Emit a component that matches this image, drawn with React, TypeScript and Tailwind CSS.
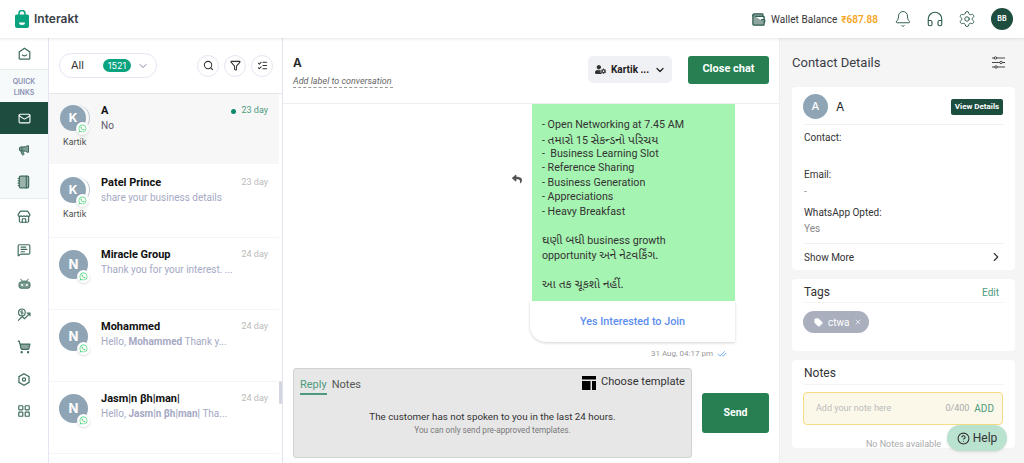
import React from "react";
import { Mail, Megaphone, Notebook, Store, MessageSquareText, ShoppingCart, LayoutGrid, Wallet, Bell, Headphones, Settings, Search, Funnel, ListChecks, ChevronDown, ChevronRight, CheckCheck, Tag, X, CircleHelp } from "lucide-react";
import { FaWhatsapp, FaReply, FaUserCog } from "react-icons/fa";

const Logo = () => (
  <svg width="14" height="18" viewBox="0 0 14 18" className="shrink-0">
    <path d="M4 5V3.5a3 3 0 0 1 6 0V5" fill="none" stroke="#0aa37f" strokeWidth="1.6" />
    <path d="M1.5 4.5h11A1.5 1.5 0 0 1 14 6v10a2 2 0 0 1-2 2H2a2 2 0 0 1-2-2V6a1.5 1.5 0 0 1 1.5-1.5z" fill="#0aa37f" />
    <path d="M4 12.5h6a3 2.5 0 0 1-6 0z" fill="#fff" />
  </svg>
);

const Home = () => (
  <svg width="13" height="13" viewBox="0 0 16 16" fill="none" stroke="#3f6b5e" strokeWidth="1.500">
    <path d="M8 1.500 14.500 6v8a1 1 0 0 1-1 1h-11a1 1 0 0 1-1-1V6z" />
    <path d="M5 9.500c1.500 2 4.500 2 6 0" />
  </svg>
);

const Bot = () => (
  <svg width="13" height="11" viewBox="0 0 16 14" fill="#7f9e94" stroke="#3f6b5e" strokeWidth="1.200">
    <path d="M3 1 5 4h6l2-3" fill="none" />
    <rect x="1" y="5" width="14" height="8" rx="2.500" />
    <circle cx="5" cy="9" r="1.300" fill="#fff" stroke="none" />
    <circle cx="11" cy="9" r="1.300" fill="#fff" stroke="none" />
  </svg>
);

const Growth = () => (
  <svg width="15" height="14" viewBox="0 0 20 18" fill="none" stroke="#3f6b5e" strokeWidth="1.500">
    <circle cx="6.500" cy="5.500" r="4.500" />
    <path d="M8 3.800H5.500a.9.900 0 0 0 0 1.800h2a.9.900 0 0 1 0 1.800H5M6.500 2.500v6" strokeWidth="1" />
    <path d="M1.500 16.500 7 11l3 3 7-7M13 6.500h4.300v4" />
  </svg>
);

const HexIcon = () => (
  <svg width="12" height="13" viewBox="0 0 16 18" fill="none" stroke="#3f6b5e" strokeWidth="1.700">
    <path d="M8 1 15 5v8l-7 4-7-4V5z" />
    <circle cx="8" cy="9" r="2.200" />
  </svg>
);

const TemplateIcon = () => (
  <svg width="14" height="14" viewBox="0 0 14 14" fill="#000" className="shrink-0">
    <rect x="0" y="0" width="14" height="3.500" />
    <rect x="0" y="5" width="8.500" height="9" />
    <rect x="10" y="5" width="4" height="9" />
  </svg>
);

const Sliders = () => (
  <svg width="13" height="13" viewBox="0 0 13 13" fill="#fff" stroke="#333" strokeWidth="0.900">
    <path d="M0 2h13M0 6.500h13M0 11h13" />
    <circle cx="3.500" cy="2" r="1.200" />
    <circle cx="9" cy="6.500" r="1.200" />
    <circle cx="4" cy="11" r="1.200" />
  </svg>
);

function Avatar({ letter, name }: { letter: string; name?: string }) {
  if (name) {
    return (
      <div className="relative w-[30px] shrink-0 mt-[2px] h-[26px]">
        <div className="absolute left-[5px] top-0 w-[26px] h-[26px] rounded-full border-r border-[#b9c5cf]" />
        <div className="relative ml-[1px] w-[26px] h-[26px] rounded-full bg-[#8fa5b5] text-white text-[12px] font-bold flex items-center justify-center font-['Inter']">{letter}</div>
        <div className="absolute left-[17px] top-[17px] w-[13px] h-[13px] rounded-full bg-white shadow-sm flex items-center justify-center">
          <FaWhatsapp className="text-[#41d070] text-[9px]" />
        </div>
        <div className="absolute top-[31px] left-[4px] text-[8.500px] leading-[12px] text-[#4b4b4b] font-['Inter']">{name}</div>
      </div>
    );
  }
  return (
    <div className="relative w-[30px] h-[30px] shrink-0 mt-[3px]">
      <div className="w-[29px] h-[29px] rounded-full bg-[#8fa5b5] text-white text-[13px] font-bold flex items-center justify-center font-['Inter']">{letter}</div>
      <div className="absolute left-[18px] top-[20px] w-[13px] h-[13px] rounded-full bg-white shadow-sm flex items-center justify-center">
        <FaWhatsapp className="text-[#41d070] text-[9px]" />
      </div>
    </div>
  );
}

function Row({ title, preview, date, letter, name, active }: { title: string; preview: React.ReactNode; date: string; letter: string; name?: string; active?: boolean }) {
  return (
    <div className={active ? "h-[70px] mb-[2px] flex pl-[10px] pr-[11px] pt-[9px] bg-[#f7f7f7]" : "h-[72px] flex pl-[10px] pr-[11px] pt-[9px] border-b border-[#f5f5f7]"}>
      <Avatar letter={letter} name={name} />
      <div className="ml-[12px] flex-1 min-w-0">
        <div className="flex justify-between items-center h-[16px]">
          <span className="text-[11px] font-bold text-[#111] whitespace-nowrap">{title}</span>
          <span className="flex items-center gap-[5px] text-[9px]">
            {active && <span className="w-[5px] h-[5px] rounded-full bg-[#0a8a6a]" />}
            <span className={active ? "text-[#4f9a7d]" : "text-[#bbb]"}>{date}</span>
          </span>
        </div>
        <div className={`text-[10px] leading-[14px] whitespace-nowrap ${active ? "text-[#5a5a6a]" : "text-[#a5a9c4]"}`}>{preview}</div>
      </div>
    </div>
  );
}

const nav = "h-[32px] flex items-center justify-center text-[#3f6b5e]";
const G = ({ children }: { children: React.ReactNode }) => <span className="inline-block text-[12px] leading-[14px]">{children}</span>;

const messageLines: React.ReactNode[] = [
  "- Open Networking at 7.45 AM",
  <>- <G>તમારો</G> 15 <G>સેકન્ડનો પરિચય</G></>,
  "-  Business Learning Slot",
  "- Reference Sharing",
  "- Business Generation",
  "- Appreciations",
  "- Heavy Breakfast",
  "",
  <><G>ઘણી બધી</G> business growth</>,
  <>opportunity <G>અને નેટવર્કિંગ.</G></>,
  "",
  <G>આ તક ચૂકશો નહીં.</G>,
];

export default function App() {
  return (
    <div className="w-[1024px] h-[463px] overflow-hidden bg-white flex flex-col font-['Roboto',sans-serif] relative">
      <header className="h-[38px] shrink-0 flex items-center pl-[15px] pr-[11px] shadow-[0_1px_3px_rgba(0,0,0,0.1)] relative z-10 bg-white">
        <Logo />
        <span className="ml-[5px] text-[12px] font-semibold text-[#3a3f48] font-['Inter']">Interakt</span>
        <div className="ml-auto flex items-center">
          <Wallet size={15} className="text-[#2f5d50]" fill="#8fa5a0" />
          <span className="ml-[5px] text-[10px] tracking-[0.05px] text-[#333]">Wallet Balance</span>
          <span className="ml-[4px] text-[10px] font-semibold text-[#f5a623]">₹687.88</span>
          <Bell size={18} strokeWidth={1.300} className="ml-[16px] text-[#2f5d50]" />
          <Headphones size={18} strokeWidth={1.500} className="ml-[14px] text-[#2f5d50]" />
          <Settings size={18} strokeWidth={1.300} className="ml-[14px] text-[#2f5d50]" />
          <div className="ml-[15px] w-[22px] h-[22px] rounded-full bg-[#1d4d3e] text-white text-[7px] font-bold flex items-center justify-center font-['Inter']">BB</div>
        </div>
      </header>

      <div className="flex flex-1 min-h-0">
        <aside className="w-[49px] shrink-0 border-r border-[#e4e6f2] flex flex-col">
          <div className="h-[31px] flex items-center justify-center"><Home /></div>
          <div className="bg-[#f6fafa] border-y border-[#e6eef0]">
            <div className="h-[32px] pt-[7px] text-center text-[7px] font-semibold leading-[10.500px] text-[#8b90b5] font-['Inter']">QUICK<br />LINKS</div>
            <div className={`${nav} !text-white bg-[#1d4d3e]`}><Mail size={13} /></div>
            <div className={nav}><Megaphone size={12} fill="#7f9e94" /></div>
            <div className={nav}><Notebook size={14} fill="#9bb3aa" /></div>
          </div>
          <div>
            <div className={`${nav} mt-[2px]`}><Store size={14} /></div>
            <div className={`${nav} mt-[1px]`}><MessageSquareText size={14} /></div>
            <div className={`${nav} mt-[1px]`}><Bot /></div>
            <div className={nav}><Growth /></div>
            <div className={nav}><ShoppingCart size={14} fill="#8fa5a0" /></div>
            <div className={nav}><HexIcon /></div>
            <div className={nav}><LayoutGrid size={14} /></div>
          </div>
        </aside>

        <section className="w-[234px] shrink-0 border-r border-[#e0e2ec] flex flex-col relative">
          <div className="h-[56px] shrink-0 flex items-center pl-[10px] pr-[9px] border-b border-[#e5e5ea]">
            <div className="w-[98px] h-[25px] rounded-full border border-[#e4e6f2] flex items-center pl-[11px]">
              <span className="text-[11px] text-[#333] font-['Inter']">All</span>
              <span className="ml-[19px] w-[28px] h-[13px] rounded-full bg-[#0aa37f] text-white text-[9px] flex items-center justify-center font-['Inter']">1521</span>
              <ChevronDown size={12} className="ml-[6px] text-[#7f8aa5]" />
            </div>
            <div className="ml-auto flex gap-[5px]">
              {[Search, Funnel, ListChecks].map((I, i) => (
                <div key={i} className="w-[22px] h-[22px] rounded-full border border-[#e4e6f2] flex items-center justify-center">
                  <I size={11} strokeWidth={2.200} className="text-[#333]" />
                </div>
              ))}
            </div>
          </div>
          <div className="flex-1 overflow-hidden pr-[3px]">
            <Row active title="A" preview="No" date="23 day" letter="K" name="Kartik" />
            <Row title="Patel Prince" preview="share your business details" date="23 day" letter="K" name="Kartik" />
            <Row title="Miracle Group" preview="Thank you for your interest. ..." date="24 day" letter="N" />
            <Row title="Mohammed" preview={<>Hello, <b>Mohammed</b> Thank y...</>} date="24 day" letter="N" />
            <Row title="Jasm|n βh|man|" preview={<>Hello, <b>Jasm|n βh|man|</b> Tha...</>} date="24 day" letter="N" />
          </div>
          <div className="absolute right-[0px] top-[343px] w-[3px] h-[23px] bg-[#d3d6df] rounded-sm" />
        </section>

        <main className="w-[497px] shrink-0 flex flex-col border-r border-[#eeeeee]">
          <div className="h-[66px] shrink-0 flex items-center pl-[10px] pr-[10px] border-b border-[#eeeeee]">
            <div className="mt-[2px]">
              <div className="text-[12px] font-semibold text-[#222] leading-[14px] mb-[6px] font-['Inter']">A</div>
              <div className="text-[9px] italic text-[#666] leading-[11px] border-b border-dashed border-[#999] w-[100px] whitespace-nowrap">Add label to conversation</div>
            </div>
            <div className="ml-auto -mt-[2px] w-[84px] h-[27px] rounded-[5px] bg-[#f0f1f5] flex items-center pl-[7px] pr-[6px] text-[10px] font-bold text-[#222]">
              <FaUserCog className="shrink-0 text-[#333] text-[11px]" />
              <span className="ml-[5px] whitespace-nowrap">Kartik ...</span>
              <ChevronDown size={12} strokeWidth={2.500} className="ml-auto" />
            </div>
            <div className="ml-[16px] -mt-[2px] w-[81px] h-[28px] rounded-[3px] bg-[#268052] text-white text-[11px] font-bold flex items-center justify-center">Close chat</div>
          </div>

          <div className="flex-1 min-h-0 overflow-hidden flex flex-col justify-end items-end pr-[44px] relative">
            <div className="flex flex-col items-end shrink-0">
              <div className="relative w-[203px] bg-[#a6f4b1] px-[10px] pt-[15px] pb-[10px] text-[10.700px] leading-[14.400px] text-[#333] font-['Roboto','Noto_Sans_Gujarati','Noto_Sans',sans-serif] whitespace-pre">
                <div className="absolute left-[-20px] top-[71px] text-[#555] text-[10px]"><FaReply /></div>
                {messageLines.map((line, i) => (
                  <div key={i} className="h-[14.400px]">{line}</div>
                ))}
              </div>
              <div className="w-[205px] h-[41px] pt-[2px] bg-white rounded-bl-[16px] shadow-[0_1px_3px_rgba(0,0,0,0.18)] flex items-center justify-center text-[10.800px] font-medium text-[#5b8def]">Yes Interested to Join</div>
            </div>
            <div className="h-[26px] shrink-0 flex items-center pr-[8px] text-[8px] text-[#999] pb-[3px] gap-[4px]">31 Aug, 04:17 pm <CheckCheck size={10} className="text-[#5aa5f0]" /></div>
          </div>

          <div className="h-[95px] shrink-0 flex items-center pl-[10px] pr-[10px] pb-[5px]">
            <div className="w-[399px] h-[90px] rounded-[3px] border border-[#d2d2d2] bg-[#e7e7e7] flex flex-col px-[6px] pt-[6px]">
              <div className="flex items-start justify-between">
                <div className="flex gap-[5px] text-[11px] mt-[3px]">
                  <span className="text-[#4f9a7d] border-b-2 border-[#4f9a7d] pb-[1px] leading-[14px]">Reply</span>
                  <span className="text-[#555] leading-[14px]">Notes</span>
                </div>
                <div className="flex items-center gap-[5px] text-[11.100px] text-[#333] h-[15px]"><TemplateIcon /> Choose template</div>
              </div>
              <div className="text-center text-[9.800px] text-[#333] leading-[12px] mt-[16px]">The customer has not spoken to you in the last 24 hours.</div>
              <div className="text-center text-[8.200px] text-[#777] leading-[11px] mt-[2px]">You can only send pre-approved templates.</div>
            </div>
            <div className="ml-[10px] w-[67px] h-[40px] rounded-[3px] bg-[#268052] text-white text-[10.500px] font-bold flex items-center justify-center">Send</div>
          </div>
        </main>

        <aside className="flex-1 bg-[#f5f5f5] pl-[12px] pr-[9px] flex flex-col">
          <div className="h-[49px] shrink-0 flex items-center justify-between pr-[10px]">
            <span className="text-[13px] text-[#3c3c46]">Contact Details</span>
            <Sliders />
          </div>
          <div className="h-[183px] shrink-0 bg-white rounded-[4px] px-[12px] pt-[7px] text-[10px] text-[#333]">
            <div className="flex items-center h-[25px] mb-[5px]">
              <div className="w-[25px] h-[25px] -ml-[1px] rounded-full bg-[#8fa5b5] text-white text-[11px] font-medium flex items-center justify-center font-['Inter']">A</div>
              <span className="ml-[8px] text-[12px] text-[#222] font-['Inter']">A</span>
              <span className="ml-auto w-[52px] h-[16px] rounded-[2px] bg-[#1d4d3e] text-white text-[8px] font-bold flex items-center justify-center">View Details</span>
            </div>
            <div className="border-t border-[#f0f0f0] pt-[7px] leading-[12px]">
              <div>Contact:</div>
              <div className="h-[25px]" />
              <div>Email:</div>
              <div className="text-[#999] mt-[5px] h-[20px]">-</div>
              <div className="mt-[1px]">WhatsApp Opted:</div>
              <div className="text-[#888] mt-[4px] mb-[8px]">Yes</div>
            </div>
            <div className="border-t border-[#f0f0f0] h-[27px] flex items-center justify-between">
              <span>Show More</span>
              <ChevronRight size={14} />
            </div>
          </div>
          <div className="mt-[9px] h-[72px] shrink-0 bg-white rounded-[4px] px-[12px]">
            <div className="h-[24px] pt-[3px] flex items-center justify-between border-b border-[#f3f3f3] pr-[4px]">
              <span className="text-[12px] text-[#333]">Tags</span>
              <span className="text-[10px] text-[#4f9a7d]">Edit</span>
            </div>
            <div className="mt-[8px] -ml-[1px] w-[66px] h-[22px] rounded-full bg-[#a9afbd] text-white text-[10px] flex items-center pl-[11px] gap-[5px]">
              <Tag size={9} fill="#fff" /> ctwa <X size={8} />
            </div>
          </div>
          <div className="mt-[9px] h-[88px] shrink-0 bg-white rounded-[4px] px-[12px] overflow-hidden">
            <div className="h-[25px] pt-[2px] flex items-center border-b border-[#f3f3f3] text-[12px] text-[#333]">Notes</div>
            <div className="mt-[7px] -ml-[1px] h-[33px] rounded-[4px] border border-[#f5dc85] bg-[#fbf8ea] flex items-center pl-[12px] pr-[8px] text-[9px] text-[#bbb]">
              <span>Add your note here</span>
              <span className="ml-auto text-[#aaa]">0/400</span>
              <span className="ml-[5px] text-[10px] text-[#4f9a7d]">ADD</span>
            </div>
            <div className="mt-[13px] text-center text-[9px] text-[#aaa]">No Notes available</div>
          </div>
        </aside>
      </div>

      <div className="absolute left-[947px] top-[425px] w-[60px] h-[26px] rounded-full bg-[#b9e2cf] shadow-sm flex items-center justify-center gap-[3px] text-[12px] text-[#333]">
        <CircleHelp size={13} /> Help
      </div>
    </div>
  );
}
